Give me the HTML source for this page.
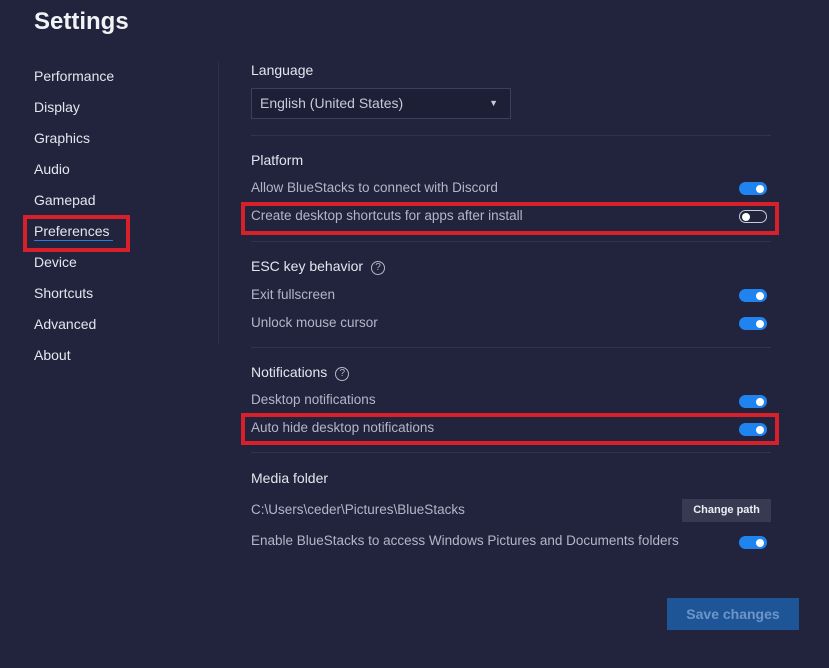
<!DOCTYPE html>
<html><head><meta charset="utf-8"><style>
body{margin:0;width:829px;height:668px;background:#22243d;font-family:"Liberation Sans",sans-serif;position:relative;overflow:hidden}
.a{position:absolute;white-space:nowrap}
.t{font-weight:bold;color:#f2f3f7;left:34px;top:8px;font-size:24px}
.n{font-size:14px;color:#e4e6ee;left:34px;line-height:16px}
.h{font-size:14px;color:#e4e6ee;left:251px;line-height:16px}
.i{font-size:13.5px;color:#b3b6c9;left:251px;line-height:16px}
.d{position:absolute;left:251px;width:520px;height:1px;background:#2f3250}
.on{position:absolute;left:739px;width:28px;height:13px;border-radius:7px;background:#1f84f0}
.on:after{content:"";position:absolute;right:3px;top:2.5px;width:8px;height:8px;border-radius:50%;background:#fff}
.off{position:absolute;left:739px;width:26px;height:11px;border-radius:7px;border:1px solid #c8cad6}
.off:after{content:"";position:absolute;left:2px;top:1.5px;width:8px;height:8px;border-radius:50%;background:#fff}
.r{position:absolute;border:4px solid #d8202b;box-sizing:border-box}
.q{display:inline-block;width:12px;height:12px;border:1px solid #b3b6c9;border-radius:50%;font-size:10px;line-height:12px;text-align:center;color:#b3b6c9;margin-left:8px;vertical-align:1px}
</style></head><body>
<div class="a t">Settings</div>
<div class="a n" style="top:68px">Performance</div>
<div class="a n" style="top:99px">Display</div>
<div class="a n" style="top:130px">Graphics</div>
<div class="a n" style="top:161px">Audio</div>
<div class="a n" style="top:192px">Gamepad</div>
<div class="a n" style="top:223px">Preferences</div>
<div class="a" style="left:34px;top:240px;width:79px;height:1px;background:#2a7ad8"></div>
<div class="a n" style="top:254px">Device</div>
<div class="a n" style="top:285px">Shortcuts</div>
<div class="a n" style="top:316px">Advanced</div>
<div class="a n" style="top:347px">About</div>
<div class="r" style="left:23px;top:215px;width:107px;height:37px"></div>
<div class="a" style="left:218px;top:62px;width:1px;height:282px;background:#2c2f4b"></div>

<div class="a h" style="top:62px">Language</div>
<div class="a" style="left:251px;top:88px;height:29px;border:1px solid #3b3e5c;background:#1d1f36;color:#c8cad8;font-size:14px;line-height:29px;padding-left:8px;width:250px">English (United States)<span style="position:absolute;right:12px;font-size:9px;color:#c8cad8">▼</span></div>
<div class="d" style="top:135px"></div>
<div class="a h" style="top:152px">Platform</div>
<div class="a i" style="top:180px">Allow BlueStacks to connect with Discord</div>
<div class="on" style="top:182px"></div>
<div class="a i" style="top:208px">Create desktop shortcuts for apps after install</div>
<div class="off" style="top:210px"></div>
<div class="r" style="left:241px;top:202px;width:538px;height:33px"></div>
<div class="d" style="top:241px"></div>
<div class="a h" style="top:258px">ESC key behavior<span class="q">?</span></div>
<div class="a i" style="top:287px">Exit fullscreen</div>
<div class="on" style="top:289px"></div>
<div class="a i" style="top:315px">Unlock mouse cursor</div>
<div class="on" style="top:317px"></div>
<div class="d" style="top:347px"></div>
<div class="a h" style="top:364px">Notifications<span class="q">?</span></div>
<div class="a i" style="top:392px">Desktop notifications</div>
<div class="on" style="top:395px"></div>
<div class="a i" style="top:420px">Auto hide desktop notifications</div>
<div class="on" style="top:423px"></div>
<div class="r" style="left:241px;top:413px;width:538px;height:32px"></div>
<div class="d" style="top:452px"></div>
<div class="a h" style="top:470px">Media folder</div>
<div class="a i" style="top:502px">C:\Users\ceder\Pictures\BlueStacks</div>
<div class="a" style="left:682px;top:499px;width:89px;height:23px;background:#383a52;color:#eceef4;font-size:11px;font-weight:bold;line-height:23px;text-align:center">Change path</div>
<div class="a i" style="top:533px">Enable BlueStacks to access Windows Pictures and Documents folders</div>
<div class="on" style="top:536px"></div>
<div class="a" style="left:667px;top:598px;width:132px;height:32px;background:#1e5597;color:#6d95c8;font-size:14px;font-weight:bold;line-height:32px;text-align:center">Save changes</div>
</body></html>
